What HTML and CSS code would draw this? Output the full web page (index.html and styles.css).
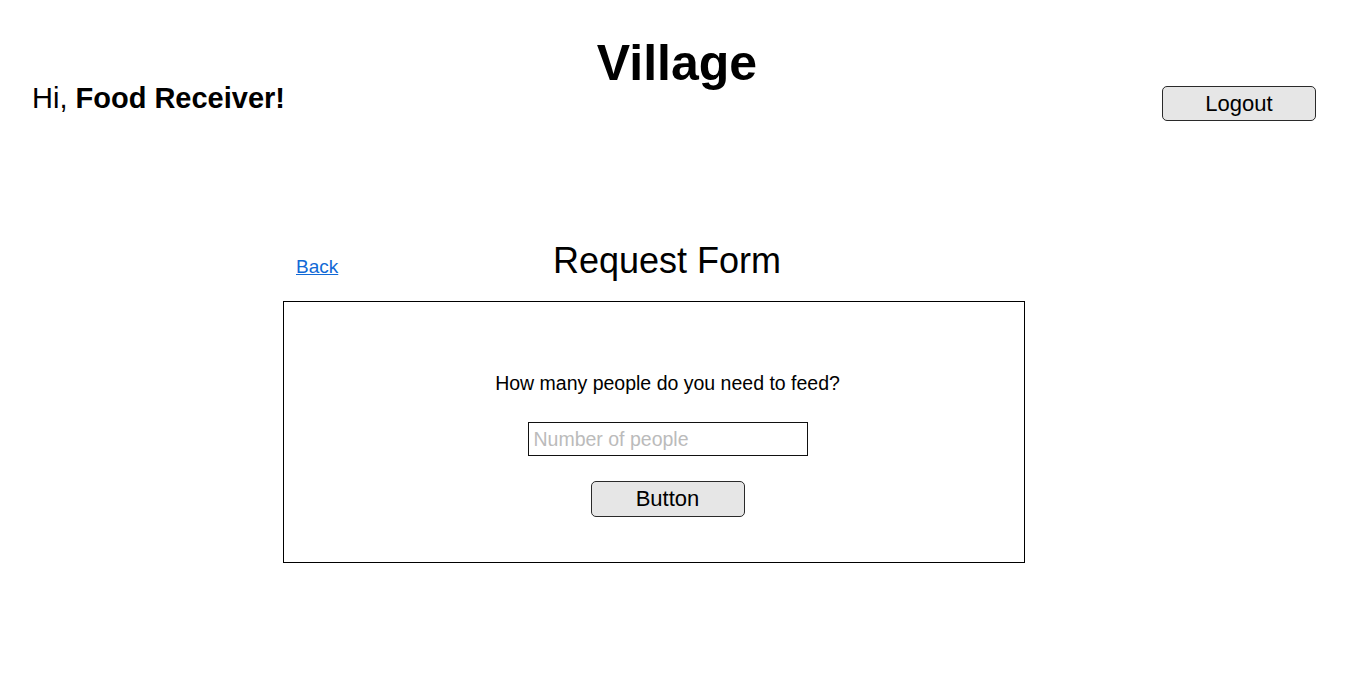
FILE: index.html
```html
<!DOCTYPE html>
<html lang="en">
<head>
<meta charset="utf-8">
<title>Village</title>
<link rel="stylesheet" href="styles.css">
</head>
<body>
<header class="topbar">
  <div class="greeting">Hi, <strong>Food Receiver!</strong></div>
  <h1 class="brand">Village</h1>
  <div class="actions"><button class="btn btn-logout" type="button">Logout</button></div>
</header>
<main class="page">
  <section class="form-wrap">
    <div class="form-head">
      <a class="back-link" href="#">Back</a>
      <h2 class="form-title">Request Form</h2>
    </div>
    <form class="form-box">
      <label class="question" for="people">How many people do you need to feed?</label>
      <input class="field" id="people" type="text" placeholder="Number of people">
      <button class="btn btn-submit" type="button">Button</button>
    </form>
  </section>
</main>
</body>
</html>
```
FILE: styles.css
```css
html, body {
  margin: 0;
  padding: 0;
  background: #ffffff;
  color: #000000;
  font-family: "Liberation Sans", Arial, sans-serif;
}

.topbar {
  display: grid;
  grid-template-columns: 1fr auto 1fr;
  align-items: start;
  padding: 35px 36px 0 32px;
}

.greeting {
  font-size: 29px;
  margin-top: 47px;
  justify-self: start;
}

.greeting strong {
  font-weight: 700;
}

.brand {
  margin: 0 0 0 6px;
  font-size: 50px;
  font-weight: 700;
  line-height: 56px;
}

.actions {
  justify-self: end;
  margin-top: 51px;
}

.btn {
  font-family: "Liberation Sans", Arial, sans-serif;
  font-size: 22px;
  color: #000;
  background: #e6e6e6;
  border: 1px solid #2a2a2a;
  border-radius: 5px;
  padding: 0;
  cursor: pointer;
}

.btn-logout {
  width: 154px;
  height: 35px;
}

.page {
  padding: 0 0 0 283px;
  margin-top: 119px;
}

.form-wrap {
  width: 742px;
}

.form-head {
  display: grid;
  align-items: baseline;
}

.back-link {
  grid-area: 1 / 1;
  justify-self: start;
  margin-left: 13px;
  font-size: 19px;
  color: #1169d6;
  text-decoration: underline;
}

.form-title {
  grid-area: 1 / 1;
  justify-self: center;
  margin: 0 0 0 26px;
  font-size: 36px;
  font-weight: 400;
  line-height: 41px;
}

.form-box {
  margin-top: 20px;
  border: 1px solid #000;
  height: 260px;
  box-sizing: content-box;
  display: flex;
  flex-direction: column;
  align-items: center;
  padding: 0 0 0 27px;
}

.question {
  margin-top: 70px;
  font-size: 19.5px;
  line-height: 22px;
}

.field {
  margin-top: 28px;
  width: 280px;
  height: 34px;
  box-sizing: border-box;
  border: 1px solid #111;
  padding: 0 5px;
  font-family: "Liberation Sans", Arial, sans-serif;
  font-size: 19.5px;
  outline: none;
}

.field::placeholder {
  color: #bbbbbb;
}

.btn-submit {
  margin-top: 25px;
  width: 154px;
  height: 36px;
}
```
